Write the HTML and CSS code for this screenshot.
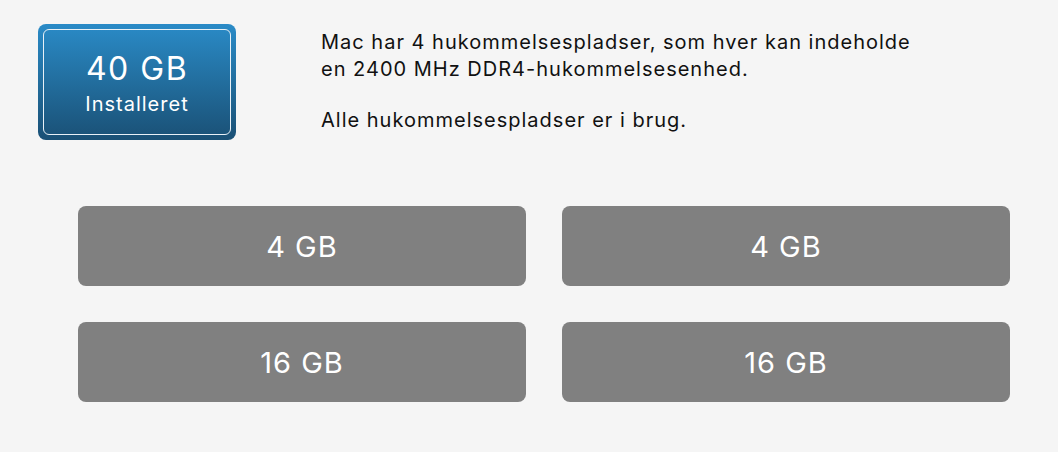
FILE: index.html
```html
<!DOCTYPE html>
<html lang="da">
<head>
    <meta charset="UTF-8">
    <title>Hukommelse</title>
    <link rel="stylesheet" href="styles.css">
</head>
<body>

    <div class="memory-top">
        <div class="installed">
            <div class="installed-inner">
                <div class="installed-size">40 GB</div>
                <div class="installed-label">Installeret</div>
            </div>
        </div>

        <div class="memory-info">
            <p>Mac har 4 hukommelsespladser, som hver kan indeholde<br>en 2400 MHz DDR4-hukommelsesenhed.</p>
            <p>Alle hukommelsespladser er i brug.</p>
        </div>
    </div>

    <div class="slots">
        <div class="slot">4 GB</div>
        <div class="slot">4 GB</div>
        <div class="slot">16 GB</div>
        <div class="slot">16 GB</div>
    </div>

</body>
</html>
```

FILE: styles.css
```css
body {
    margin: 0;
    background-color: #f5f5f5;
    font-family: Inter, "Liberation Sans", Arial, sans-serif;
    color: #111;
}

.memory-top {
    display: flex;
    padding: 24px 0 0 38px;
}

.installed {
    width: 198px;
    height: 116px;
    padding: 5px;
    box-sizing: border-box;
    border-radius: 8px;
    background: linear-gradient(#2a8bc7, #1a5075);
}

.installed-inner {
    height: 100%;
    box-sizing: border-box;
    border: 1.5px solid #e8f0f6;
    border-radius: 6px;
    display: flex;
    flex-direction: column;
    align-items: center;
    justify-content: center;
    color: white;
}

.installed-size {
    font-size: 32px;
    line-height: 36px;
    letter-spacing: 1.5px;
    margin-top: 2px;
}

.installed-label {
    font-size: 20px;
    line-height: 24px;
    letter-spacing: 1px;
    margin-top: 5px;
}

.memory-info {
    margin-left: 85px;
    padding-top: 5px;
    font-size: 20px;
    line-height: 27px;
    letter-spacing: 1px;
}

.memory-info p {
    margin: 0 0 24px 0;
}

.slots {
    display: grid;
    grid-template-columns: 448px 448px;
    gap: 36px;
    padding: 48px 0 0 78px;
}

.slot {
    height: 80px;
    border-radius: 8px;
    background-color: #808080;
    color: white;
    font-size: 29px;
    letter-spacing: 1px;
    display: flex;
    align-items: center;
    justify-content: center;
}
```
